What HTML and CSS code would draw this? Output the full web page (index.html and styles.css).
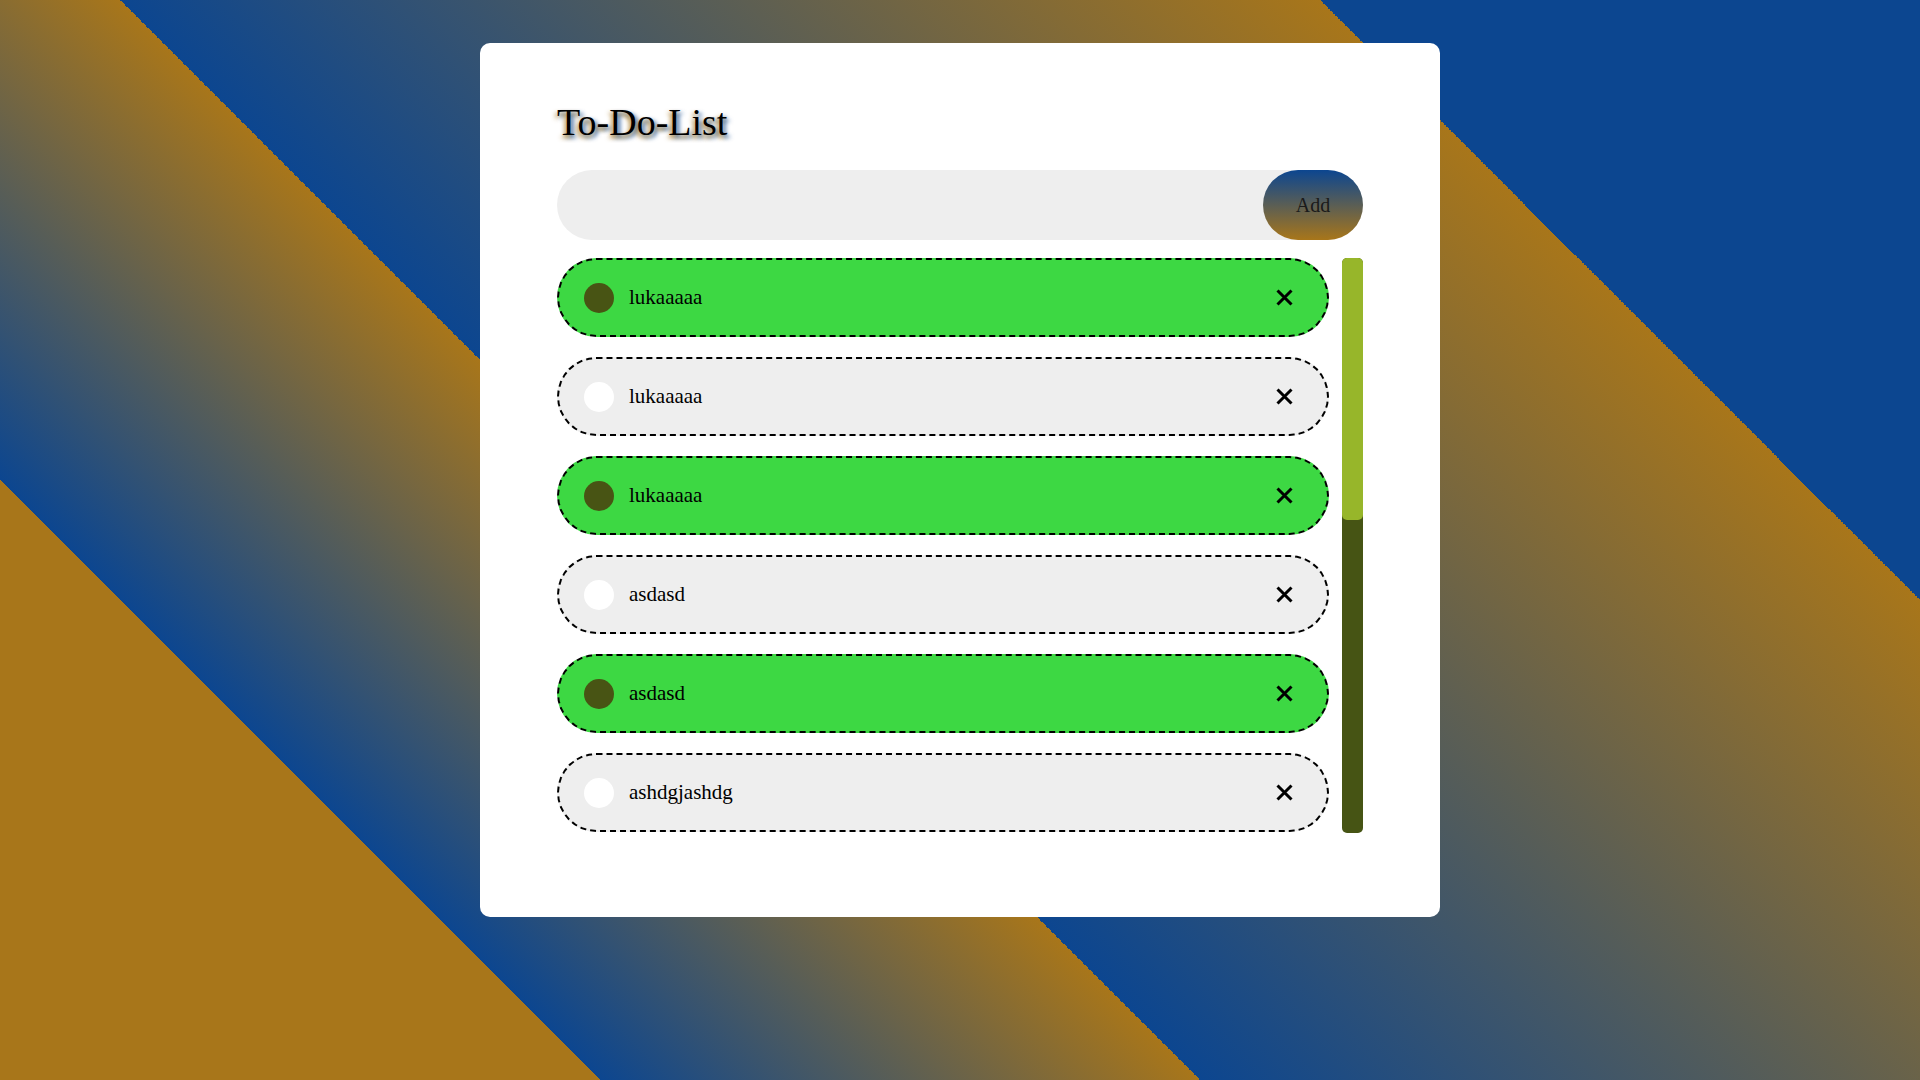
FILE: index.html
```html
<!DOCTYPE html>
<html lang="en">
<head>
<meta charset="utf-8">
<title>To-Do-List</title>
<link rel="stylesheet" href="styles.css">
</head>
<body>
<div class="card">
  <h1 class="title">To-Do-List</h1>
  <div class="add-row">
    <input class="add-input" type="text">
    <button class="add-btn">Add</button>
  </div>
  <div class="list-wrap">
    <ul class="list">
      <li class="item done"><span class="dot"></span><span class="label">lukaaaaa</span><svg class="del" viewBox="0 0 17 17"><path d="M1.5 1.5 L15.5 15.5 M15.5 1.5 L1.5 15.5"/></svg></li>
      <li class="item"><span class="dot"></span><span class="label">lukaaaaa</span><svg class="del" viewBox="0 0 17 17"><path d="M1.5 1.5 L15.5 15.5 M15.5 1.5 L1.5 15.5"/></svg></li>
      <li class="item done"><span class="dot"></span><span class="label">lukaaaaa</span><svg class="del" viewBox="0 0 17 17"><path d="M1.5 1.5 L15.5 15.5 M15.5 1.5 L1.5 15.5"/></svg></li>
      <li class="item"><span class="dot"></span><span class="label">asdasd</span><svg class="del" viewBox="0 0 17 17"><path d="M1.5 1.5 L15.5 15.5 M15.5 1.5 L1.5 15.5"/></svg></li>
      <li class="item done"><span class="dot"></span><span class="label">asdasd</span><svg class="del" viewBox="0 0 17 17"><path d="M1.5 1.5 L15.5 15.5 M15.5 1.5 L1.5 15.5"/></svg></li>
      <li class="item"><span class="dot"></span><span class="label">ashdgjashdg</span><svg class="del" viewBox="0 0 17 17"><path d="M1.5 1.5 L15.5 15.5 M15.5 1.5 L1.5 15.5"/></svg></li>
    </ul>
    <div class="scrollbar"><div class="thumb"></div></div>
  </div>
</div>
</body>
</html>
```

FILE: styles.css
```css
html {
  height: 100%;
}

body {
  margin: 0;
  min-height: 100%;
  font-family: "Liberation Serif", "Times New Roman", serif;
  background: linear-gradient(45deg,
    #a8761a 0%, #a8761a 20%,
    #0c4690 20%, #a8761a 40%,
    #0c4690 40%, #a8761a 80%,
    #0c4690 80%, #0c4690 100%);
  background-attachment: fixed;
}

.card {
  width: 960px;
  box-sizing: border-box;
  margin: 43px auto 0;
  padding: 57px 77px 84px;
  background: #ffffff;
  border-radius: 10px;
}

.title {
  margin: 0 0 26px;
  font-size: 38px;
  line-height: 44px;
  font-weight: normal;
  color: #000;
  text-shadow: -2px 3px 4px rgba(168, 118, 26, 0.8), 3px 3px 4px rgba(12, 70, 144, 0.8);
}

.add-row {
  display: flex;
  align-items: center;
  height: 70px;
  background: #eeeeee;
  border-radius: 35px;
  margin-bottom: 18px;
}

.add-input {
  flex: 1;
  height: 100%;
  border: none;
  outline: none;
  background: transparent;
  padding: 0 30px;
  font-family: inherit;
  font-size: 20px;
}

.add-btn {
  width: 100px;
  height: 70px;
  border: none;
  border-radius: 35px;
  background: linear-gradient(180deg, #0c4690, #a8761a);
  font-family: "Liberation Serif", serif;
  font-size: 20px;
  color: #1a1a1a;
  padding: 0;
}

.list-wrap {
  display: flex;
  gap: 13px;
  height: 575px;
}

.list {
  flex: 1;
  list-style: none;
  margin: 0;
  padding: 0;
  display: flex;
  flex-direction: column;
  gap: 20px;
}

.scrollbar {
  width: 21px;
  height: 575px;
  background: #465414;
  border-radius: 5px;
}

.thumb {
  height: 262px;
  background: #97b62a;
  border-radius: 5px;
}

.item {
  flex: 0 0 auto;
  display: flex;
  align-items: center;
  box-sizing: border-box;
  height: 79px;
  padding: 0 34px 0 25px;
  border: 2px dashed #000;
  border-radius: 40px;
  background: #eeeeee;
  font-size: 21px;
  color: #000;
}

.item.done {
  background: #3dd843;
}

.dot {
  width: 30px;
  height: 30px;
  border-radius: 50%;
  background: #ffffff;
  margin-right: 15px;
  flex: 0 0 auto;
}

.item.done .dot {
  background: #485414;
}

.label {
  flex: 1;
  line-height: 24px;
  margin-top: -2px;
}

.del {
  width: 17px;
  height: 17px;
  fill: none;
  stroke: #000;
  stroke-width: 3;
  flex: 0 0 auto;
}
```
